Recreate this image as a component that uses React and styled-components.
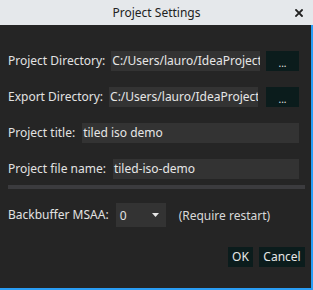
import React from "react";
import styled, { createGlobalStyle } from "styled-components";

const Global = createGlobalStyle`
  html, body { margin: 0; padding: 0; background: #252525; }
  body { font-family: "Noto Sans", "Open Sans", sans-serif; font-size: 12px; }
  * { box-sizing: border-box; }
`;

const Window = styled.div`
  width: 313px;
  height: 290px;
  display: flex;
  flex-direction: column;
  background: #252525;
`;

const TitleBar = styled.div`
  height: 25px;
  flex: none;
  background: #e5e8eb;
  display: flex;
  align-items: center;
  justify-content: center;
  position: relative;
  color: #222222;
  font-size: 12px;
  font-weight: 400;
`;

const Close = styled.div`
  position: absolute;
  right: 10px;
  top: 9px;
  width: 8px;
  height: 8px;
  display: flex;
`;

const Body = styled.div`
  flex: 1;
  border-right: 2px solid #2a9df4;
  border-bottom: 2px solid #2a9df4;
  padding: 26px 6px 0 8px;
  display: flex;
  flex-direction: column;
  color: #e2e2e2;
`;

const Row = styled.div`
  display: flex;
  align-items: center;
  height: ${(p) => p.$h ?? 20}px;
  margin-right: ${(p) => p.$mr ?? 6}px;
  margin-bottom: ${(p) => p.$mb ?? 16}px;
  justify-content: ${(p) => p.$justify ?? "space-between"};
`;

const Group = styled.div`
  display: flex;
  align-items: center;
  flex: none;
`;

const Label = styled.span`
  white-space: nowrap;
  margin-right: ${(p) => p.$gap ?? 7}px;
  line-height: 20px;
  flex: none;
`;

const Field = styled.div`
  background: #333333;
  height: 20px;
  line-height: 20px;
  padding-left: 1px;
  white-space: nowrap;
  overflow: hidden;
  color: #e6e6e6;
  ${(p) => (p.$width ? `width: ${p.$width}px; flex: none;` : "flex: 1; min-width: 0;")}
`;

const Button = styled.div`
  background: #0b1c1c;
  color: #e6e6e6;
  height: 20px;
  line-height: ${(p) => p.$lh ?? 20}px;
  text-align: center;
  width: ${(p) => p.$width}px;
  flex: none;
  font-size: ${(p) => p.$size ?? 12}px;
`;

const Separator = styled.div`
  height: 4px;
  background: #3b3b3e;
  margin-top: 6px;
  margin-bottom: 14px;
`;

const Select = styled.div`
  width: 50px;
  height: 24px;
  background: #333333;
  display: flex;
  align-items: center;
  justify-content: space-between;
  padding: 0 7px 0 4px;
  margin-right: 13px;
`;

const Hint = styled.span`
  color: #d8d8d8;
`;

const Footer = styled.div`
  display: flex;
  justify-content: flex-end;
  gap: 6px;
  margin-top: 20px;
`;

export default function App() {
  const path = "C:/Users/lauro/IdeaProject";
  return (
    <>
      <Global />
      <Window>
        <TitleBar>
          Project Settings
          <Close>
            <svg width="8" height="8" viewBox="0 0 8 8">
              <path d="M1 1L7 7M7 1L1 7" stroke="#222" strokeWidth="1.8" strokeLinecap="square" />
            </svg>
          </Close>
        </TitleBar>
        <Body>
          <Row>
            <Group>
              <Label $gap={6}>Project Directory:</Label>
              <Field $width={149}>{path}</Field>
            </Group>
            <Button $width={33} $size={10} $lh={24}>...</Button>
          </Row>
          <Row>
            <Group>
              <Label $gap={6}>Export Directory:</Label>
              <Field $width={149}>{path}</Field>
            </Group>
            <Button $width={33} $size={10} $lh={24}>...</Button>
          </Row>
          <Row>
            <Label>Project title:</Label>
            <Field>tiled iso demo</Field>
          </Row>
          <Row $mb={0}>
            <Label>Project file name:</Label>
            <Field>tiled-iso-demo</Field>
          </Row>
          <Separator />
          <Row $mb={0} $mr={0} $h={24} $justify="flex-start">
            <Label>Backbuffer MSAA:</Label>
            <Select>
              <span>0</span>
              <svg width="7" height="4" viewBox="0 0 7 4">
                <path d="M0 0H7L3.5 4Z" fill="#e6e6e6" />
              </svg>
            </Select>
            <Hint>(Require restart)</Hint>
          </Row>
          <Footer>
            <Button $width={25}>OK</Button>
            <Button $width={46}>Cancel</Button>
          </Footer>
        </Body>
      </Window>
    </>
  );
}
